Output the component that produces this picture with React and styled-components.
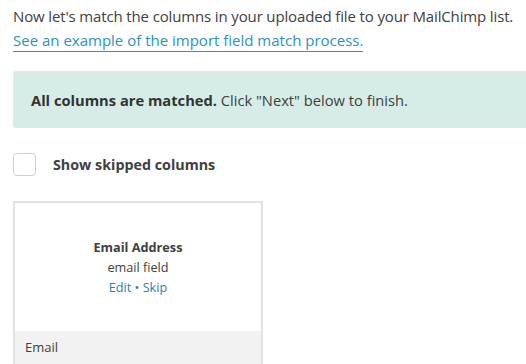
import React from 'react';
import styled, { createGlobalStyle } from 'styled-components';

const GlobalStyle = createGlobalStyle`
  body {
    margin: 0;
    background: #fff;
    font-family: 'Open Sans', 'Noto Sans', sans-serif;
    color: #404040;
  }
`;

const Page = styled.div`
  padding: 4px 0 0 13px;
  overflow: hidden;
  width: 513px;
  height: 360px;
`;

const Intro = styled.p`
  margin: 0;
  font-size: 15px;
  line-height: 24px;
  white-space: nowrap;
  letter-spacing: ${(p) => (p.$tight ? '-0.14px' : '0')};
`;

const Link = styled.a`
  color: #2a93bf;
  text-decoration: none;
  border-bottom: 1px solid #2a93bf;
  padding-bottom: 1px;
`;

const Alert = styled.div`
  margin-top: 19px;
  width: 530px;
  height: 57px;
  box-sizing: border-box;
  padding: 0 18px;
  display: flex;
  align-items: center;
  background: #d5ede6;
  border-radius: 3px 0 0 3px;
  font-size: 14.7px;
  white-space: nowrap;
`;

const Strong = styled.strong`
  font-weight: 700;
  color: #333;
`;

const CheckRow = styled.label`
  margin-top: 25px;
  display: flex;
  align-items: center;
  gap: 17px;
  font-size: 14.3px;
  font-weight: 700;
`;

const Box = styled.span`
  width: 23px;
  height: 23px;
  box-sizing: border-box;
  border: 1px solid #cfcfcf;
  border-radius: 4px;
  background: #fff;
`;

const Card = styled.div`
  margin-top: 25px;
  width: 250px;
  height: 180px;
  box-sizing: border-box;
  border: 2px solid #e2e2e2;
  border-bottom: none;
  display: flex;
  flex-direction: column;
`;

const CardBody = styled.div`
  height: 128px;
  display: flex;
  flex-direction: column;
  align-items: center;
  justify-content: center;
  font-size: 12.7px;
  line-height: 20px;
  box-sizing: border-box;
`;

const FieldName = styled.div`
  font-weight: 700;
`;

const Actions = styled.div`
  color: #2b7fae;
`;

const CardFooter = styled.div`
  flex: 1;
  background: #f2f2f2;
  padding: 7px 10px;
  font-size: 13px;
`;

export default function App() {
  return (
    <>
      <GlobalStyle />
      <Page>
        <Intro $tight>Now let's match the columns in your uploaded file to your MailChimp list.</Intro>
        <Intro>
          <Link href="#">See an example of the import field match process.</Link>
        </Intro>
        <Alert>
          <span>
            <Strong>All columns are matched.</Strong> Click "Next" below to finish.
          </span>
        </Alert>
        <CheckRow>
          <Box />
          Show skipped columns
        </CheckRow>
        <Card>
          <CardBody>
            <FieldName>Email Address</FieldName>
            <div>email field</div>
            <Actions>Edit • Skip</Actions>
          </CardBody>
          <CardFooter>Email</CardFooter>
        </Card>
      </Page>
    </>
  );
}
